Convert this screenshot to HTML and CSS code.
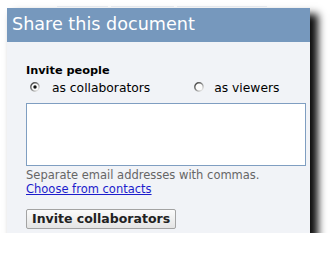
FILE: index.html
```html
<!DOCTYPE html>
<html lang="en">
<head>
    <meta charset="UTF-8">
    <meta name="viewport" content="width=device-width, initial-scale=1.0">
    <title>Share this document</title>
    <link rel="stylesheet" href="styles.css">
</head>
<body>
    <div class="page">
        <div class="tabs">
            <span class="tab tab-1"></span>
            <span class="tab tab-2"></span>
            <span class="tab tab-3"></span>
        </div>

        <div class="dialog">
            <div class="dialog-title">Share this document</div>

            <div class="dialog-body">
                <div class="label">Invite people</div>

                <div class="roles">
                    <label class="role role-collab">
                        <svg class="radio" width="10" height="10" viewBox="0 0 10 10">
                            <defs>
                                <linearGradient id="ring" x1="0" y1="0" x2="1" y2="1">
                                    <stop offset="0" stop-color="#333333"/>
                                    <stop offset="0.5" stop-color="#8c8c8c"/>
                                    <stop offset="1" stop-color="#ffffff"/>
                                </linearGradient>
                            </defs>
                            <circle cx="5" cy="5" r="4.2" fill="#fbfbfb" stroke="url(#ring)" stroke-width="1.4"/>
                            <circle cx="5" cy="5" r="1.7" fill="#111"/>
                        </svg>
                        as collaborators
                    </label>
                    <label class="role role-viewer">
                        <svg class="radio" width="10" height="10" viewBox="0 0 10 10">
                            <circle cx="5" cy="5" r="4.2" fill="#fbfbfb" stroke="url(#ring)" stroke-width="1.4"/>
                        </svg>
                        as viewers
                    </label>
                </div>

                <textarea class="emails"></textarea>

                <div class="hint">Separate email addresses with commas.</div>
                <div class="contacts"><a href="#">Choose from contacts</a></div>

                <button class="invite">Invite collaborators</button>
            </div>
        </div>
    </div>
</body>
</html>
```

FILE: styles.css
```css
body {
    margin: 0;
    background: #ffffff;
    font-family: "DejaVu Sans", "Liberation Sans", sans-serif;
}

.page {
    padding: 0 0 0 7px;
}

/* faint edges of the page behind the dialog */
.tabs {
    display: flex;
    height: 8px;
    padding-left: 50px;
    gap: 3px;
}

.tab {
    height: 2px;
    margin-top: 6px;
    border-top: 1px solid #e4e8ee;
}

.tab-1 { width: 51px; }
.tab-2 { width: 63px; }
.tab-3 { width: 90px; }

.dialog {
    width: 303px;
    background-color: #f1f3f7;
    box-shadow: 7px 7px 8px 1px rgba(0, 0, 0, 0.95);
}

.dialog-title {
    height: 34px;
    box-sizing: border-box;
    padding: 6px 5px 0;
    background-color: #7698bd;
    color: #ffffff;
    font-size: 17.6px;
    line-height: 20px;
}

.dialog-body {
    padding: 22px 4px 4px 19px;
}

.label {
    font-size: 11.3px;
    font-weight: bold;
    line-height: 13px;
    color: #000;
}

.roles {
    display: flex;
    margin-top: 4px;
    font-size: 12.3px;
    line-height: 14px;
    color: #000;
}

.role {
    display: flex;
    align-items: center;
    gap: 12px;
}

.role-collab {
    margin-left: 4px;
}

.role-viewer {
    margin-left: 44px;
    gap: 10px;
}

.radio {
    flex: none;
    margin-top: -3px;
}

.emails {
    display: block;
    box-sizing: border-box;
    width: 280px;
    height: 63px;
    margin: 8px 0 0;
    border: 1px solid #7f9ec1;
    background: #ffffff;
    resize: none;
    padding: 2px;
}

.hint {
    margin-top: 2px;
    font-size: 11.5px;
    line-height: 14px;
    color: #666666;
}

.contacts {
    font-size: 11.5px;
    line-height: 14px;
}

.contacts a {
    color: #1c1ccc;
}

.invite {
    display: block;
    height: 20px;
    margin-top: 13px;
    padding: 0 5px;
    border: 1px solid #a3a3a3;
    border-radius: 2px;
    background: linear-gradient(to bottom, #fbfbfb, #e4e4e4);
    font-family: "DejaVu Sans", "Liberation Sans", sans-serif;
    font-size: 12.5px;
    font-weight: bold;
    line-height: 18px;
    color: #222;
}
```
